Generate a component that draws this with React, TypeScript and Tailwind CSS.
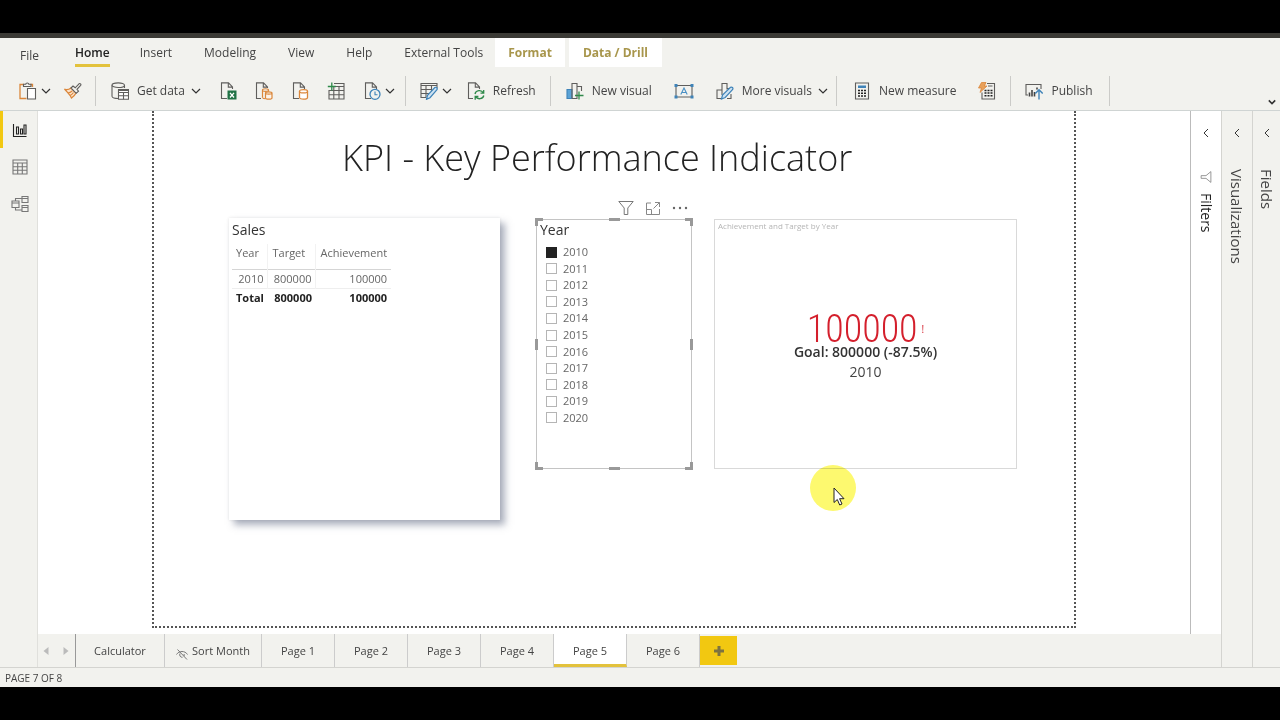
import type { ReactNode } from 'react';

type IconProps = { children: ReactNode; className?: string; stroke?: string };

const Icon = ({ children, className = 'h-[18px] w-[18px]', stroke = '#5f5e5c' }: IconProps) => (
  <svg className={`shrink-0 ${className}`} viewBox="0 0 18 18" fill="none" stroke={stroke} strokeWidth="1.1" aria-hidden="true">
    {children}
  </svg>
);

const Chevron = ({ className = 'h-1.5 w-2.5', width = 1.2 }: { className?: string; width?: number }) => (
  <svg className={`shrink-0 ${className}`} viewBox="0 0 10 6" fill="none" stroke="#333" strokeWidth={width} aria-hidden="true">
    <path d="M1 1l4 4 4-4" />
  </svg>
);

// Sheet outline shared by the data source icons
const pagePath = 'M8 16.5H2.5V.9h7l4 4V7M9.3.9v4.2h4.2';

const PasteIcon = () => (
  <Icon>
    <path d="M5 2.500H1v14h6.500M11.500 2.500h2V5" stroke="#db873b" strokeWidth="1.300" />
    <path d="M4.500 4.500V2.300h2.200C6.900 .600 9.600 .600 9.800 2.300H12v2.200z" />
    <path d="M8.500 6.500h8v10.500h-8z" fill="#fff" />
  </Icon>
);

const BrushIcon = () => (
  <Icon>
    <path d="M1 7.500c2.500.500 4.500-.300 6-1.500l5 5c-1 2-2.500 3.800-4.500 5C6 12.500 3.500 10.500 1 7.500z" fill="#fbe3cc" stroke="#db873b" strokeWidth="1.300" />
    <path d="M4 11c2-.3 3-1 4.200-2M6 13.500c1.500-.5 2.500-1.500 3.500-3" stroke="#db873b" />
    <path d="M7 6l2-2 2.200 1.800L15 1.800c1-.8 2.500.5 1.600 1.600L13 7.300l1.500 1.800-2.300 2.200z" fill="#f2f2ee" />
  </Icon>
);

const DatabaseIcon = () => (
  <Icon>
    <path d="M7 16.500c-3 0-6-.8-6-2.200V3.200M13.500 3.200V6" />
    <ellipse cx="7.250" cy="3.200" rx="6.250" ry="2.300" />
    <path d="M7.500 7.500h10v9.700h-10z" fill="#fff" />
    <path d="M7.500 8.500h10M7.500 10.500h10M7.500 13.800h10M12.500 10.500v6.700" />
  </Icon>
);

const ExcelIcon = () => (
  <Icon>
    <path d={pagePath} />
    <path d="M8.500 8.500h9v9h-9z" fill="#217346" stroke="none" />
    <path d="M11 10.800l4 4.700M15 10.800l-4 4.700" stroke="#fff" strokeWidth="1.300" />
  </Icon>
);

const DatasetIcon = () => (
  <Icon>
    <path d="M6 16.500H1.500V.900h7l4 4V6M8.300.900v4.200h4.200" />
    <path d="M7.500 15.800V8c0-1.700 6-1.700 6 0v1.500" fill="none" stroke="#db873b" strokeWidth="1.200" />
    <path d="M7.500 8.200c0 1.500 6 1.500 6 0M7.500 15.800c.5.700 1.500 1 3 1" stroke="#db873b" />
    <path d="M10.500 11c0-1.500 6.500-1.500 6.500 0v5c0 1.600-6.500 1.600-6.500 0zM10.500 11c0 1.500 6.500 1.500 6.500 0" fill="#fdf3e8" stroke="#db873b" strokeWidth="1.200" />
  </Icon>
);

const SqlIcon = () => (
  <Icon>
    <path d={pagePath} />
    <path d="M8.500 15.500V9.300c0-2.200 8-2.200 8 0v6.200c0 2.200-8 2.200-8 0z" fill="#fff" stroke="#db873b" strokeWidth="1.300" />
    <path d="M8.500 9.400c0 2 8 2 8 0" stroke="#db873b" strokeWidth="1.300" />
  </Icon>
);

const EnterDataIcon = () => (
  <Icon>
    <path d="M7 1.500h10V17H2V8M7 4.500h10M2 8.500h15M2 12.800h15M6.800 4.500V17M12 4.500V17" />
    <path d="M4.800.500v8M.800 4.500h8" stroke="#2f8a4a" strokeWidth="1.300" />
  </Icon>
);

const RecentIcon = () => (
  <Icon>
    <path d={pagePath} />
    <circle cx="12" cy="12.300" r="5" fill="#f2f2ee" stroke="#3f83b8" strokeWidth="1.300" />
    <path d="M12 9.500v3.200h2.500" stroke="#3f83b8" />
  </Icon>
);

const TransformIcon = () => (
  <Icon>
    <path d="M6 15.500H1v-14h16V6M1 3.500h16M1 7.500h11M1 11.500h8M6 3.500v12M11.500 3.500V9" />
    <path d="M6.500 17.300l1-4L14.800 5.500c1.500-.8 3 .8 2.200 2.200l-7 8z" fill="#cfe3f2" stroke="#3f83b8" strokeWidth="1.200" />
  </Icon>
);

const RefreshIcon = () => (
  <Icon>
    <path d="M6 16.500H1.500V.900h7l4 4V7M8.300.900v4.200h4.200" />
    <path d="M8 12c.800-4 6.500-4.500 8.300-1.200M16.700 8v3.200h-3.200M16.800 13.500c-.8 3.800-6.300 4.300-8.200 1.200M8.200 17.700v-3.200h3.200" stroke="#2f8a4a" strokeWidth="1.300" />
  </Icon>
);

const NewVisualIcon = () => (
  <Icon>
    <path d="M1 7.500h5v9H1z" fill="#5ba3d6" stroke="#3f83b8" />
    <path d="M6 16.500V1.500h5v15H6M11 9.500V4.500h4.500V9" />
    <path d="M13 9.500v8M9 13.500h8.500" stroke="#2f8a4a" strokeWidth="1.300" />
  </Icon>
);

const TextBoxIcon = () => (
  <svg className="h-[18px] w-5 shrink-0" viewBox="0 0 20 18" fill="none" aria-hidden="true">
    <path d="M2 3.500h16v11.500H2z" stroke="#5f5e5c" strokeWidth="1.100" />
    <path d="M6.800 12.500L10 6l3.200 6.500M8 10.500h4" stroke="#4a90c4" strokeWidth="1.100" />
    <path d="M.500 2h3v3h-3zM16.500 2h3v3h-3zM.500 13.500h3v3h-3zM16.500 13.500h3v3h-3z" fill="#3f83b8" />
  </svg>
);

const MoreVisualsIcon = () => (
  <Icon>
    <path d="M6 16.500H1V8h5M6 13V1.500h5v6M11 6.500h4M15 12v4.500h-4" />
    <path d="M5.500 17l1-4 8-7.700c1.500-.8 3 .7 2.200 2.200l-7.500 8z" fill="#cfe3f2" stroke="#3f83b8" strokeWidth="1.200" />
  </Icon>
);

const CalculatorIcon = () => (
  <Icon>
    <path d="M2.500 1h13v16h-13z" />
    <path d="M5 3.500h8V6H5z" fill="#3f83b8" stroke="none" />
    <path d="M5 8.500h2M8 8.500h2M11 8.500h2M5 11.200h2M8 11.200h2M11 11.200h2M5 14h2M8 14h2M11 14h2" stroke="#222" strokeWidth="1.600" />
  </Icon>
);

const QuickMeasureIcon = () => (
  <Icon>
    <path d="M9 1.500h7.500v15.500H4V10.500M10 4h4.500" />
    <path d="M6.500 8.500h2M9.500 8.500h2M12.500 8.500h2M6.500 11h2M9.500 11h2M12.500 11h2M6.500 13.800h2M9.500 13.800h2M12.500 13.800h2" stroke="#222" strokeWidth="1.500" />
    <path d="M3.500.500H8L6.300 4H9L2 10.500 3.500 6H.500z" fill="#e9a15b" stroke="#db873b" strokeWidth=".8" />
  </Icon>
);

const PublishIcon = () => (
  <Icon>
    <path d="M3 13H1V2.500h15V7" />
    <path d="M4.500 14.500v-4M7 14.500V8M9.500 14.500V10M12 5.500v2" stroke="#444" strokeWidth="1.600" />
    <path d="M14 17.500V8M10.300 11.500L14 7.800l3.700 3.700" stroke="#3f83b8" strokeWidth="1.400" />
  </Icon>
);

const ReportViewIcon = () => (
  <Icon stroke="#222">
    <path d="M2.500 3v12.500h13M5.500 6h2v7h-2zM9.500 8h2v5h-2zM13 4h2v9h-2z" />
  </Icon>
);

const DataViewIcon = () => (
  <Icon stroke="#777">
    <path d="M2 2h14v14H2zM2 5h14M2 8.700h14M2 12.300h14M6.700 5v11M11.300 5v11" />
  </Icon>
);

const ModelViewIcon = () => (
  <Icon stroke="#777">
    <path d="M1 6h7v6.500H1zM1 8h7M11 1.500h6v6h-6zM11 3.500h6M11 10.500h6v6h-6zM11 12.500h6M4.500 6V3.500H11M4.500 12.500v2.500H11" />
  </Icon>
);

const FunnelIcon = ({ className = 'h-4 w-4' }: { className?: string }) => (
  <svg className={className} viewBox="0 0 16 16" fill="none" stroke="#777" strokeWidth="1" aria-hidden="true">
    <path d="M.800 1.500h14.400L9.800 8v6.500H6.200V8z" />
  </svg>
);

const Group = ({ className, children }: { className: string; children: ReactNode }) => (
  <div className={`flex h-[30px] items-center border-r border-[#cbcbc8] ${className}`}>{children}</div>
);

type ToolProps = { icon: ReactNode; label: string; text?: boolean; menu?: boolean };

const Tool = ({ icon, label, text, menu }: ToolProps) => (
  <button type="button" aria-label={label} className="flex items-center whitespace-nowrap">
    {icon}
    {text && <span className="ml-2">{label}</span>}
    {menu && <Chevron className={text ? 'ml-1.5 h-1.5 w-2.5' : 'ml-1 h-1.5 w-2.5'} />}
  </button>
);

const ribbonTabs = ['Insert', 'Modeling', 'View', 'Help', 'External Tools'];
const pages = ['Page 1', 'Page 2', 'Page 3', 'Page 4', 'Page 5', 'Page 6'];
const years = [2010, 2011, 2012, 2013, 2014, 2015, 2016, 2017, 2018, 2019, 2020];

// Resize grips of the selected visual
const handles = [
  '-left-0.5 -top-0.5 h-2 w-2 border-l-[3px] border-t-[3px]',
  '-right-0.5 -top-0.5 h-2 w-2 border-r-[3px] border-t-[3px]',
  '-left-0.5 -bottom-0.5 h-2 w-2 border-l-[3px] border-b-[3px]',
  '-right-0.5 -bottom-0.5 h-2 w-2 border-r-[3px] border-b-[3px]',
  'left-[72px] -top-0.5 w-[11px] border-t-[3px]',
  'left-[72px] -bottom-0.5 w-[11px] border-t-[3px]',
  '-left-0.5 top-[119px] h-[11px] border-l-[3px]',
  '-right-0.5 top-[119px] h-[11px] border-l-[3px]',
];

const Ribbon = () => (
  <header className="border-b border-[#cfd4d3] bg-[#f2f2ee] text-xs text-[#444]">
    <nav className="flex h-[30px] items-center">
      <a href="#file" className="ml-5 mt-1.5">File</a>
      <a href="#home" className="ml-9 flex h-full flex-col font-semibold text-[#222]">
        <span className="flex h-[26px] items-center pt-1">Home</span>
        <span className="h-[3px] bg-[#e3c23c]" />
      </a>
      <div className="ml-[30px] flex gap-8">
        {ribbonTabs.map((tab) => (
          <a key={tab} href={`#${tab}`}>{tab}</a>
        ))}
      </div>
      <div className="ml-3 flex h-full gap-1 pb-px font-bold text-[#a8964c]">
        <a href="#format" className="flex items-center bg-white px-[13px]">Format</a>
        <a href="#drill" className="flex items-center bg-white px-3.5">Data / Drill</a>
      </div>
    </nav>
    <div className="flex h-[42px] items-center pt-[3px]">
      <Group className="gap-[13px] pl-[19px] pr-[13px]">
        <Tool icon={<PasteIcon />} label="Paste" menu />
        <Tool icon={<BrushIcon />} label="Format painter" />
      </Group>
      <Group className="gap-[18px] pl-[15px] pr-2.5">
        <Tool icon={<DatabaseIcon />} label="Get data" text menu />
        <Tool icon={<ExcelIcon />} label="Excel" />
        <Tool icon={<DatasetIcon />} label="Power BI datasets" />
        <Tool icon={<SqlIcon />} label="SQL Server" />
        <Tool icon={<EnterDataIcon />} label="Enter data" />
        <Tool icon={<RecentIcon />} label="Recent sources" menu />
      </Group>
      <Group className="gap-[15px] px-3.5">
        <Tool icon={<TransformIcon />} label="Transform data" menu />
        <Tool icon={<RefreshIcon />} label="Refresh" text />
      </Group>
      <Group className="gap-[22px] pl-[15px] pr-2">
        <Tool icon={<NewVisualIcon />} label="New visual" text />
        <Tool icon={<TextBoxIcon />} label="Text box" />
        <Tool icon={<MoreVisualsIcon />} label="More visuals" text menu />
      </Group>
      <Group className="gap-[22px] pl-4 pr-3.5">
        <Tool icon={<CalculatorIcon />} label="New measure" text />
        <Tool icon={<QuickMeasureIcon />} label="Quick measure" />
      </Group>
      <Group className="pl-3.5 pr-4">
        <Tool icon={<PublishIcon />} label="Publish" text />
      </Group>
      <button type="button" aria-label="Collapse ribbon" className="ml-auto self-end pb-[5px] pr-1">
        <Chevron className="h-1.5 w-2" width={2} />
      </button>
    </div>
  </header>
);

const SalesTable = () => (
  <section className="h-[302px] w-[271px] shrink-0 bg-white px-[3px] pt-0.5 shadow-[5px_5px_7px_rgba(90,100,125,0.5),0_0_3px_rgba(0,0,0,0.1)]">
    <h2 className="text-sm leading-5 text-[#333]">Sales</h2>
    <table className="mt-1 text-[11px] leading-[18px] text-[#666]">
      <thead>
        <tr className="h-[25px] border-b border-[#d5d5d5] text-left align-top">
          <th className="w-[35px] border-r border-[#f2f2f2] px-1 font-normal">Year</th>
          <th className="w-12 border-r border-[#f2f2f2] px-1 font-normal">Target</th>
          <th className="px-1 font-normal">Achievement</th>
        </tr>
      </thead>
      <tbody className="text-right">
        <tr className="border-b border-[#eee]">
          <td className="border-r border-[#f2f2f2] px-1">2010</td>
          <td className="border-r border-[#f2f2f2] px-1">800000</td>
          <td className="px-1">100000</td>
        </tr>
      </tbody>
      <tfoot className="text-right font-bold text-[#222]">
        <tr>
          <td className="px-1">Total</td>
          <td className="px-1">800000</td>
          <td className="px-1">100000</td>
        </tr>
      </tfoot>
    </table>
  </section>
);

const YearSlicer = () => (
  <section className="relative mt-px h-[250px] w-[156px] shrink-0 border border-[#c4c4c4] bg-white pl-[3px]">
    <div className="absolute -top-5 right-[3px] flex items-center gap-[11px]">
      <button type="button" aria-label="Filters on this visual"><FunnelIcon /></button>
      <button type="button" aria-label="Focus mode">
        <svg className="h-4 w-4" viewBox="0 0 16 16" fill="none" stroke="#888" aria-hidden="true">
          <path d="M6 3H1.500v11.500h13V9M1.500 9.500h5v5M8.500 8.500L14.500 2.500M10 2.500h4.500V7" />
        </svg>
      </button>
      <button type="button" aria-label="More options">
        <svg className="h-4 w-4" viewBox="0 0 16 16" fill="#666" aria-hidden="true">
          <circle cx="2" cy="8" r="1.200" />
          <circle cx="8" cy="8" r="1.200" />
          <circle cx="14" cy="8" r="1.200" />
        </svg>
      </button>
    </div>
    {handles.map((pos) => (
      <span key={pos} className={`absolute border-[#999] ${pos}`} />
    ))}
    <h2 className="text-sm leading-5 text-[#333]">Year</h2>
    <ul className="mt-1 flex h-[182px] flex-col pl-1.5 text-[11px] leading-4 text-[#666]">
      {years.map((year) => (
        <li key={year} className="flex flex-1 items-center">
          <label className="flex items-center gap-1.5">
            <input
              type="checkbox"
              defaultChecked={year === 2010}
              className="h-[11px] w-[11px] appearance-none border border-[#b5b5b5] bg-white checked:border-[#222] checked:bg-[#222]"
            />
            {year}
          </label>
        </li>
      ))}
    </ul>
  </section>
);

const KpiCard = () => (
  <section className="mt-px flex h-[250px] w-[303px] shrink-0 flex-col border border-[#d9d9d9] bg-white">
    <h2 className="pl-[3px] text-[8px] leading-3 text-[#b5b5b5]">Achievement and Target by Year</h2>
    <div className="flex flex-col items-center pt-[82px]">
      <p className="flex items-center gap-1 text-[#d41f2c]">
        <span className="font-['Roboto_Condensed',Roboto,sans-serif] text-[38px] font-light leading-[30px]">100000</span>
        <span className="text-[10px] leading-4">!</span>
      </p>
      <p className="text-sm font-semibold leading-4 text-[#333]">Goal: 800000 (-87.5%)</p>
      <p className="text-sm leading-6 text-[#444]">2010</p>
    </div>
  </section>
);

const Canvas = () => (
  <main className="flex flex-1 flex-col bg-white px-[114px] pb-1.5">
    <div className="relative flex-1 border-2 border-t-0 border-dotted border-[#555]">
      <h1 className="pl-[188px] pt-[22px] text-4xl font-light leading-[50px] text-[#222]">KPI - Key Performance Indicator</h1>
      <div className="mt-[35px] flex pl-[75px]">
        <SalesTable />
        <div className="ml-9 flex gap-[22px]">
          <YearSlicer />
          <KpiCard />
        </div>
      </div>
      {/* Pointer with its highlight */}
      <div className="absolute left-[656px] top-[354px] h-[46px] w-[46px] rounded-full bg-[#fdf96f] mix-blend-multiply" />
      <svg className="absolute left-[679px] top-[376px] h-5 w-3" viewBox="0 0 12 20" fill="#fff" stroke="#222" aria-hidden="true">
        <path d="M1 1v14.500l3.300-3 2.400 5.500 2.300-1-2.400-5.300H11z" />
      </svg>
    </div>
  </main>
);

const PageTabs = () => (
  <nav className="flex h-[33px] bg-[#f2f2ee] text-[11px] font-medium text-[#444]">
    <div className="flex w-[38px] items-center justify-between border-r border-[#999] pl-[5px] pr-1.5 text-[#bbb]">
      <button type="button" aria-label="Previous page">
        <svg className="h-2 w-1.5" viewBox="0 0 6 8" fill="currentColor"><path d="M5.500 0v8L.500 4z" /></svg>
      </button>
      <button type="button" aria-label="Next page">
        <svg className="h-2 w-1.5" viewBox="0 0 6 8" fill="currentColor"><path d="M.500 0v8L5.500 4z" /></svg>
      </button>
    </div>
    <button type="button" className="w-[89px] border-r border-[#ccc] pt-0.5">Calculator</button>
    <button type="button" className="flex w-[97px] items-center justify-center gap-1 border-r border-[#ccc] pt-0.5">
      <svg className="mt-1 h-3 w-3" viewBox="0 0 12 12" fill="none" stroke="#777" aria-hidden="true">
        <path d="M.500 6.500c2.500-4 8.500-4 11 0M4 5.500c-1 2 .500 4 2.500 3.800M8 6c.3.700.3 1.500 0 2.200M1.500 1.500l9.500 10" />
      </svg>
      Sort Month
    </button>
    {pages.map((page) => (
      <button
        key={page}
        type="button"
        className={
          page === 'Page 5'
            ? 'w-[73px] border-b-[3px] border-r border-b-[#e3c23c] border-r-[#ccc] bg-white pt-1'
            : 'w-[73px] border-r border-[#ccc] pt-0.5'
        }
      >
        {page}
      </button>
    ))}
    <button type="button" aria-label="New page" className="my-0.5 flex w-[37px] items-center justify-center bg-[#f2c811]">
      <svg className="h-3 w-3" viewBox="0 0 12 12" stroke="#7d7240" strokeWidth="3" aria-hidden="true">
        <path d="M6 1v10M1 6h10" />
      </svg>
    </button>
  </nav>
);

const SidePane = ({ title, className }: { title: string; className: string }) => (
  <aside className={`flex flex-col items-center border-l border-[#d4d4d0] text-[15px] text-[#444] ${className}`}>
    <button type="button" aria-label={`Expand ${title}`} className="flex h-11 items-center">
      <Chevron className="h-1.5 w-2.5 rotate-90" width={1} />
    </button>
    <h2 className="mt-3.5 leading-5 [writing-mode:vertical-rl]">{title}</h2>
  </aside>
);

export default function App() {
  return (
    <div className="flex min-h-screen flex-col bg-black py-[33px] font-['Open_Sans','Noto_Sans',sans-serif]">
      <div className="h-[5px] bg-[#3b3a35]" />
      <Ribbon />
      <div className="flex flex-1 bg-[#f2f2ee]">
        <nav className="flex w-[38px] flex-col border-r border-[#e0e0dc]">
          <button type="button" aria-label="Report" className="flex h-[37px] items-center border-l-[3px] border-[#f2c811] pl-2"><ReportViewIcon /></button>
          <button type="button" aria-label="Data" className="flex h-[37px] items-center pl-[11px]"><DataViewIcon /></button>
          <button type="button" aria-label="Model" className="flex h-[37px] items-center pl-[11px]"><ModelViewIcon /></button>
        </nav>
        <div className="flex flex-1 flex-col">
          <div className="flex flex-1">
            <Canvas />
            <aside className="flex w-[31px] flex-col items-center border-l border-[#bbb] bg-white text-sm font-medium text-[#222]">
              <button type="button" aria-label="Expand Filters" className="flex h-11 items-center">
                <Chevron className="h-1.5 w-2.5 rotate-90" width={1} />
              </button>
              <FunnelIcon className="mt-4 h-3 w-3 rotate-90" />
              <h2 className="mt-2.5 leading-5 [writing-mode:vertical-rl]">Filters</h2>
            </aside>
          </div>
          <PageTabs />
        </div>
        <SidePane title="Visualizations" className="w-[31px]" />
        <SidePane title="Fields" className="w-7" />
      </div>
      <footer className="flex h-5 items-center border-t border-[#d4d4d0] bg-[#f2f2ee] pl-[5px] pt-0.5 text-[10px] text-[#444]">PAGE 7 OF 8</footer>
    </div>
  );
}
